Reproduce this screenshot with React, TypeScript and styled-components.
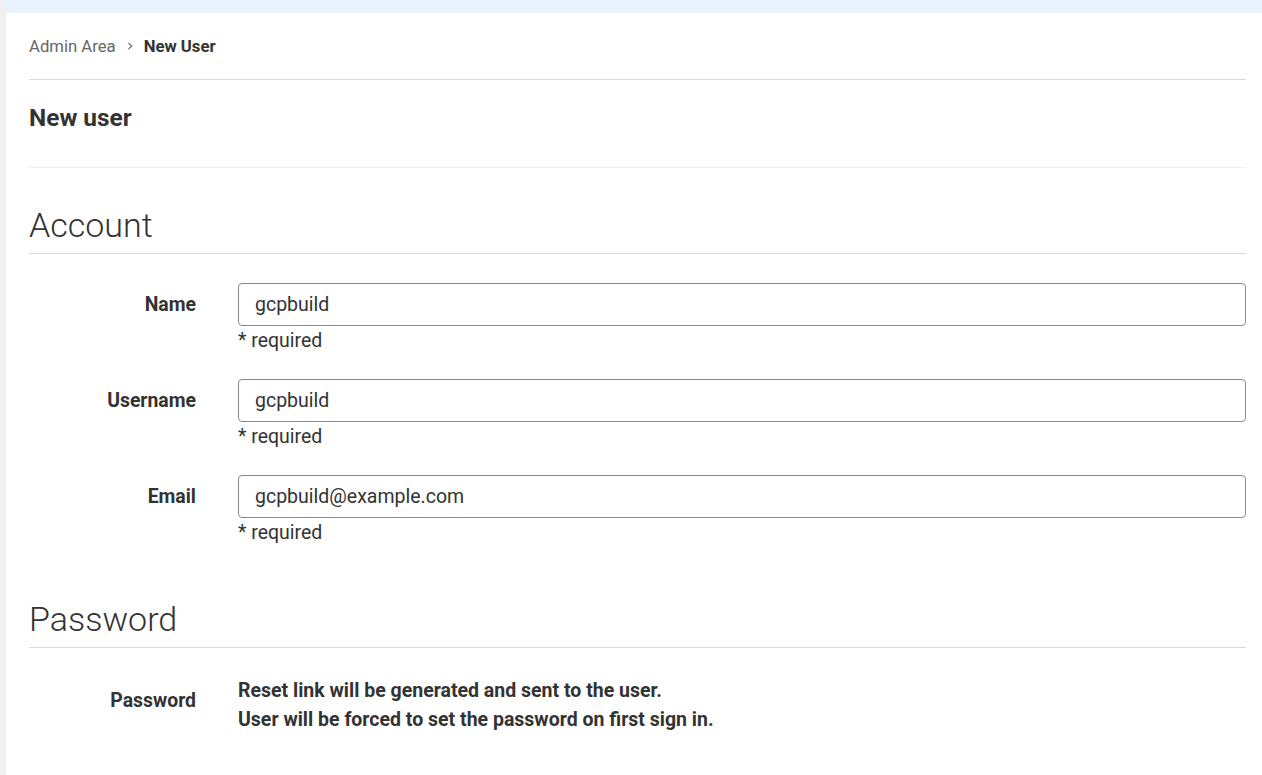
import React from 'react';
import styled, { createGlobalStyle } from 'styled-components';

const GlobalStyle = createGlobalStyle`
  html, body {
    margin: 0;
    padding: 0;
    background: #fff;
    font-family: Roboto, "Liberation Sans", Arial, sans-serif;
    color: #333;
  }
  * { box-sizing: border-box; }
`;

const Page = styled.div`
  display: flex;
  min-height: 100vh;
`;

const SideStrip = styled.div`
  width: 6px;
  flex: none;
  background: #f0f0f0;
`;

const Main = styled.div`
  flex: 1;
  display: flex;
  flex-direction: column;
`;

const TopBar = styled.div`
  height: 13px;
  background: #e8f2fc;
`;

const Content = styled.div`
  padding: 0 16px 0 23px;
`;

const Breadcrumb = styled.nav`
  height: 67px;
  display: flex;
  align-items: center;
  gap: 9px;
  font-size: 16.7px;
  color: #666;
  border-bottom: 1px solid #dbdbdb;
`;

const Crumb = styled.span<{ $current?: boolean }>`
  color: ${(p) => (p.$current ? '#333' : '#666')};
  font-weight: ${(p) => (p.$current ? 700 : 400)};
`;

const PageTitle = styled.h1`
  margin: 0;
  padding: 26px 0 37px;
  font-size: 24.4px;
  line-height: 24px;
  font-weight: 700;
  color: #333;
  border-bottom: 1px solid #efefef;
`;

const SectionTitle = styled.h2<{ $top: number }>`
  margin: ${(p) => p.$top}px 0 0;
  padding-bottom: 8px;
  font-size: 34px;
  line-height: 40px;
  font-weight: 300;
  color: #333;
  border-bottom: 1px solid #dbdbdb;
`;

const Fields = styled.div<{ $top: number }>`
  display: flex;
  flex-direction: column;
  gap: 26px;
  margin-top: ${(p) => p.$top}px;
`;

const Row = styled.div`
  display: grid;
  grid-template-columns: 167px 1fr;
  column-gap: 42px;
  align-items: start;
`;

const Label = styled.label<{ $pad?: number }>`
  text-align: right;
  font-weight: 700;
  font-size: 19.4px;
  line-height: ${(p) => (p.$pad !== undefined ? '29px' : '43px')};
  padding-top: ${(p) => p.$pad ?? 0}px;
  color: #333;
`;

const Input = styled.input`
  display: block;
  width: 100%;
  height: 43px;
  padding: 0 16px;
  border: 1px solid #8a8a8e;
  border-radius: 4px;
  font-family: inherit;
  font-size: 19.5px;
  color: #333;
  background: #fff;
  outline: none;
`;

const Help = styled.div`
  margin-top: 3px;
  font-size: 19.5px;
  line-height: 24px;
  color: #333;
`;

const Note = styled.div`
  font-size: 19.5px;
  line-height: 29px;
  font-weight: 700;
  color: #333;
`;

const fields = [
  { label: 'Name', value: 'gcpbuild' },
  { label: 'Username', value: 'gcpbuild' },
  { label: 'Email', value: 'gcpbuild@example.com' },
];

function Chevron() {
  return (
    <svg width="10" height="10" viewBox="0 0 10 10" fill="none">
      <path d="M3.5 1.8 L6.7 5 L3.5 8.2" stroke="#666" strokeWidth="1.2" />
    </svg>
  );
}

export default function App() {
  return (
    <Page>
      <GlobalStyle />
      <SideStrip />
      <Main>
        <TopBar />
        <Content>
          <Breadcrumb>
            <Crumb>Admin Area</Crumb>
            <Chevron />
            <Crumb $current>New User</Crumb>
          </Breadcrumb>
          <PageTitle>New user</PageTitle>

          <SectionTitle $top={37}>Account</SectionTitle>
          <Fields $top={29}>
            {fields.map((f) => (
              <Row key={f.label}>
                <Label>{f.label}</Label>
                <div>
                  <Input defaultValue={f.value} />
                  <Help>* required</Help>
                </div>
              </Row>
            ))}
          </Fields>

          <SectionTitle $top={54}>Password</SectionTitle>
          <Fields $top={28}>
            <Row>
              <Label $pad={10}>Password</Label>
              <div>
                <Note>Reset link will be generated and sent to the user.</Note>
                <Note>User will be forced to set the password on first sign in.</Note>
              </div>
            </Row>
          </Fields>
        </Content>
      </Main>
    </Page>
  );
}
